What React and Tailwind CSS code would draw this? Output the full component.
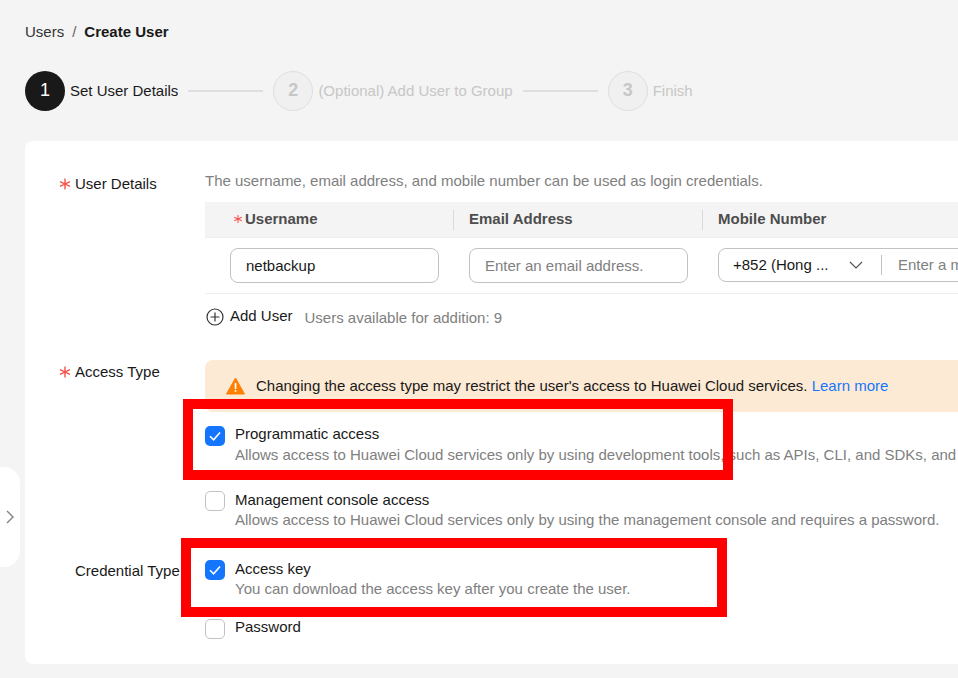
import React from "react";

const Check = () => (
  <svg width="14" height="14" viewBox="0 0 14 14" fill="none" stroke="white" strokeWidth="1.6">
    <path d="M2 7.2 L5.6 10.8 L12 3.4" />
  </svg>
);

const Box = ({ on }) =>
  on ? (
    <span className="flex h-5 w-5 shrink-0 items-center justify-center rounded-[5px] bg-[#1476ff]">
      <Check />
    </span>
  ) : (
    <span className="h-5 w-5 shrink-0 rounded-[5px] border border-[#c2c2c2] bg-white" />
  );

const Option = ({ on, title, desc, low, className }) => (
  <div className={"flex h-5 gap-[10px] " + className}>
    <Box on={on} />
    <div className="-mt-[2px] whitespace-nowrap leading-[20px]">
      <div className={low ? "mt-px text-[#191919]" : "text-[#191919]"}>{title}</div>
      {desc && <div className={low ? "text-[#808080]" : "mt-px text-[#808080]"}>{desc}</div>}
    </div>
  </div>
);

const Req = ({ className }) => (
  <span className={"text-[#f66f6a] " + className}>
    <svg width="12" height="12" viewBox="0 0 12 12" stroke="#f5524d" strokeWidth="1.4" fill="none">
      <path d="M6 0.6 V11.4 M1 3.6 L11 8.4 M11 3.6 L1 8.4" />
    </svg>
  </span>
);

const Step = ({ n, label, active }) => (
  <div className="flex items-center">
    <span
      className={
        active
          ? "flex h-10 w-10 items-center justify-center rounded-full bg-[#191919] text-[18px] font-normal text-white"
          : "flex h-10 w-10 items-center justify-center rounded-full border border-[#dfdfdf] bg-[#f0f0f0] text-[18px] font-bold text-[#c7c7c7]"
      }
    >
      <span className="-mt-[2px]">{n}</span>
    </span>
    <span className={"ml-[5px] mt-px whitespace-nowrap text-[15px] " + (active ? "text-[#191919]" : "text-[#c7c7c7]")}>{label}</span>
  </div>
);

const Line = () => <span className="mx-[10px] -mt-[1px] h-[2px] w-[75px] bg-[#dfdfdf]" />;

const Input = ({ value, placeholder, className }) => (
  <div className={"flex h-[35px] shrink-0 items-center rounded-[8px] border border-[#c2c2c2] bg-white px-[15px] " + className}>
    <span className={"mt-px " + (value ? "text-[#191919]" : "text-[#808080]")}>{value || placeholder}</span>
  </div>
);

export default function App() {
  return (
    <div className="relative h-[678px] w-[958px] overflow-hidden bg-[#f4f4f4] pl-[25px] pt-[22px] text-[15px] font-['Liberation_Sans',Arial,sans-serif]">
      <div className="flex h-5 items-center leading-[20px]">
        <span className="text-[#333]">Users</span>
        <span className="mx-[8px] text-[#666]">/</span>
        <span className="font-bold text-[#191919]">Create User</span>
      </div>

      <div className="mt-[29px] flex h-10 items-center">
        <Step n="1" label="Set User Details" active />
        <Line />
        <Step n="2" label="(Optional) Add User to Group" />
        <Line />
        <Step n="3" label="Finish" />
      </div>

      <div className="mt-[30px] h-[523px] w-[1100px] rounded-[8px] bg-white pt-[30px]">
        <div className="flex">
          <div className="relative w-[180px] shrink-0 pl-[50px] pt-[3px] leading-[20px] text-[#191919]">
            <Req className="absolute left-[34px] top-[7px]" />
            User Details
          </div>
          <div className="w-[860px] shrink-0">
            <div className="leading-[20px] text-[#808080]">
              The username, email address, and mobile number can be used as login credentials.
            </div>
            <div className="mt-[11px] flex h-[36px] items-center border-b border-[#eeeeee] bg-[#f4f4f4] font-bold text-[#4d4d4d]">
              <div className="relative flex h-5 w-[248px] items-center pl-[40px]">
                <Req className="absolute left-[27px] top-[3px] scale-75" />
                Username
              </div>
              <div className="flex h-5 w-[249px] items-center border-l border-[#d9d9d9] pl-[15px]">Email Address</div>
              <div className="flex h-5 w-[300px] items-center border-l border-[#d9d9d9] pl-[15px]">Mobile Number</div>
            </div>
            <div className="flex h-[56px] items-start border-b border-[#eeeeee] pl-[25px] pt-[10px]">
              <Input value="netbackup" className="w-[209px]" />
              <Input placeholder="Enter an email address." className="ml-[30px] w-[219px]" />
              <div className="ml-[30px] flex h-[34px] w-[400px] shrink-0 items-center whitespace-nowrap rounded-[8px] border border-[#c2c2c2] pl-[14px]">
                <span className="w-[116px] text-[#191919]">+852 (Hong ...</span>
                <svg width="14" height="14" viewBox="0 0 14 14" fill="none" stroke="#555" strokeWidth="1.2">
                  <path d="M1 4 L7 10 L13 4" />
                </svg>
                <span className="ml-[18px] h-5 w-px bg-[#c2c2c2]" />
                <span className="ml-[16px] mt-px text-[#808080]">Enter a mobile number.</span>
              </div>
            </div>
            <div className="mt-[13px] flex h-5 items-center">
              <svg width="18" height="18" viewBox="0 0 18 18" fill="none" stroke="#333" strokeWidth="1.2" className="ml-px">
                <circle cx="9" cy="9" r="8" />
                <path d="M9 4.5 V13.5 M4.5 9 H13.5" />
              </svg>
              <span className="ml-[6px] -mt-[1px] text-[#191919]">Add User</span>
              <span className="ml-[12px] mt-[2px] text-[#808080]">Users available for addition: 9</span>
            </div>
          </div>
        </div>

        <div className="mt-[33px] flex">
          <div className="w-[180px] shrink-0">
            <div className="relative pl-[50px] pt-[2px] leading-[20px] text-[#191919]">
              <Req className="absolute left-[34px] top-[6px]" />
              Access Type
            </div>
            <div className="mt-[179px] pl-[50px] leading-[20px] text-[#191919]">Credential Type</div>
          </div>
          <div className="w-[860px] shrink-0">
            <div className="flex h-[52px] items-center rounded-l-[8px] bg-[#fdead4] pl-[21px]">
              <svg width="19" height="18" viewBox="0 0 19 18" className="shrink-0">
                <path d="M9.5 1 L18.5 17 H0.5 Z" fill="#ff7f00" stroke="#ff7f00" strokeLinejoin="round" />
                <rect x="8.7" y="6" width="1.7" height="6" fill="#fff" />
                <rect x="8.7" y="13" width="1.7" height="1.8" fill="#fff" />
              </svg>
              <span className="ml-[11px] whitespace-nowrap text-[#191919]">
                Changing the access type may restrict the user's access to Huawei Cloud services.{" "}
                <span className="text-[#1476ff]">Learn more</span>
              </span>
            </div>
            <Option
              on
              title="Programmatic access"
              desc="Allows access to Huawei Cloud services only by using development tools, such as APIs, CLI, and SDKs, and"
              className="mt-[14px]"
            />
            <Option
              low
              title="Management console access"
              desc="Allows access to Huawei Cloud services only by using the management console and requires a password."
              className="mt-[45px]"
            />
            <Option
              on
              low
              title="Access key"
              desc="You can download the access key after you create the user."
              className="mt-[49px]"
            />
            <Option title="Password" className="mt-[39px]" />
          </div>
        </div>
      </div>

      <div className="absolute left-0 top-[467px] flex h-[100px] w-[20px] items-center justify-center rounded-r-[16px] bg-white">
        <svg width="10" height="14" viewBox="0 0 10 14" fill="none" stroke="#808080" strokeWidth="1.4">
          <path d="M2 1 L8 7 L2 13" />
        </svg>
      </div>

      <div className="absolute left-[183px] top-[399px] h-[81px] w-[550px] border-[10px] border-[#ff0000]" />
      <div className="absolute left-[181px] top-[538px] h-[79px] w-[546px] border-[10px] border-[#ff0000]" />
    </div>
  );
}
